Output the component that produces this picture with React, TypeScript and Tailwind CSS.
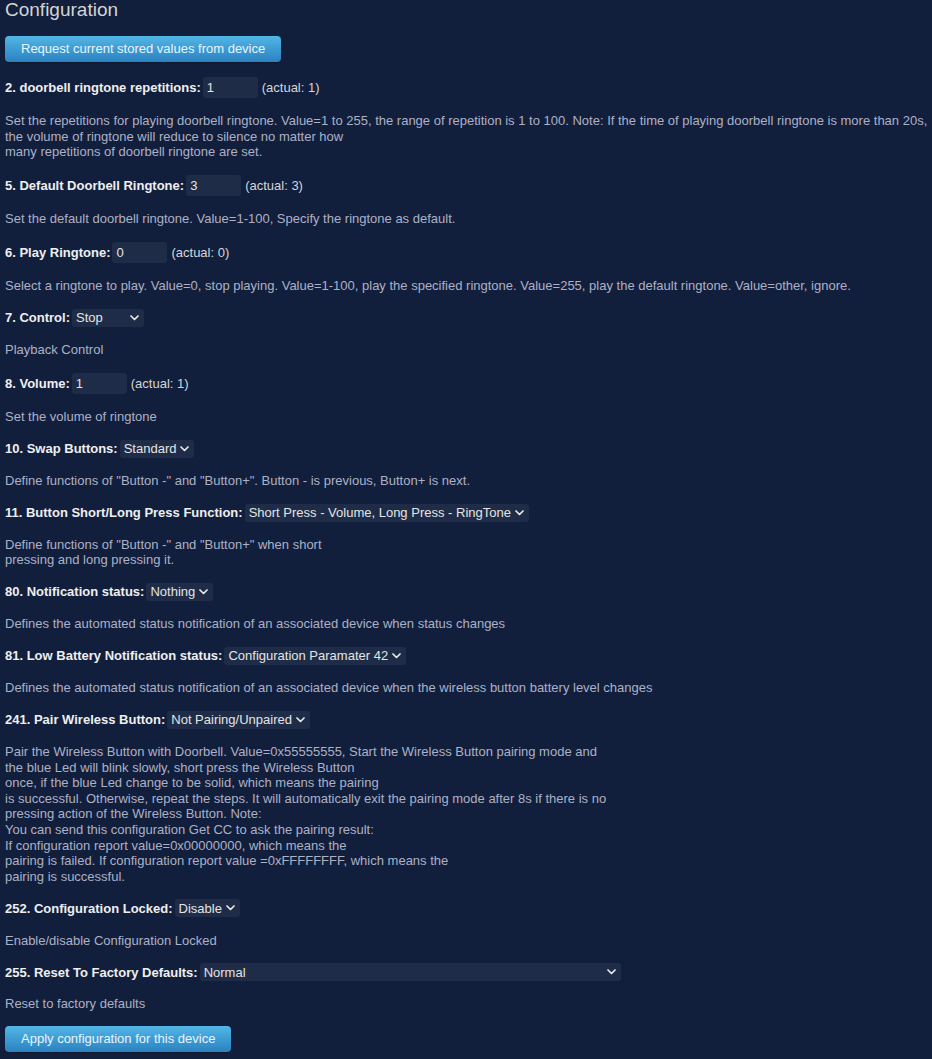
import React from "react";

const Chevron = () => (
  <svg width="9" height="6" viewBox="0 0 9 6" className="shrink-0">
    <path d="M1 1 L4.5 4.5 L8 1" fill="none" stroke="#e8e8e8" strokeWidth="1.7" strokeLinecap="round" strokeLinejoin="round" />
  </svg>
);

const Select = ({ value, w }: { value: string; w?: string }) => (
  <div className={`ml-[2px] h-[18px] ${w ?? ""} flex items-center justify-between gap-[4px] rounded-[3px] bg-[#1f2c47] pl-[4px] pr-[5px] text-[#e4e4e4] font-normal whitespace-nowrap`}>
    <span>{value}</span>
    <Chevron />
  </div>
);

const Input = ({ value, actual }: { value: string; actual: string }) => (
  <>
    <div className="ml-[2px] h-[21px] w-[55px] flex items-center rounded-[3px] bg-[#1f2c47] pl-[4px] text-[#e4e4e4] font-normal">
      {value}
    </div>
    <span className="ml-[4px] font-normal text-[#d6d6d6]">(actual: {actual})</span>
  </>
);

const Row = ({ label, children, tall }: { label: string; children: React.ReactNode; tall?: boolean }) => (
  <div className={`mt-[15.15px] flex items-center ${tall ? "h-[21px]" : "h-[18px]"} font-bold text-[#efefef] whitespace-nowrap`}>
    <span>{label}</span>
    {children}
  </div>
);

const Desc = ({ lines }: { lines: string[] }) => (
  <div className="mt-[15.15px] text-[#adb1c6] leading-[1.2]">
    {lines.map((l, i) => (
      <div key={i} className="whitespace-nowrap">{l}</div>
    ))}
  </div>
);

const Btn = ({ children }: { children: React.ReactNode }) => (
  <div className="inline-flex h-[26px] items-center rounded-[4px] bg-gradient-to-b from-[#52b6e6] to-[#2a82c0] px-[16px] text-[#e9f5fd] shadow-[0_1px_1px_rgba(0,0,0,0.3)]">
    {children}
  </div>
);

export default function App() {
  return (
    <div className="min-h-screen w-full bg-[#121f3c] text-[13px] pl-[5px] overflow-hidden" style={{ fontFamily: "'Liberation Sans', Arial, sans-serif" }}>
      <div className="text-[19px] leading-[19px] text-[#d4d4d4]">Configuration</div>
      <div className="mt-[17px]">
        <Btn>Request current stored values from device</Btn>
      </div>

      <Row label="2. doorbell ringtone repetitions:" tall>
        <Input value="1" actual="1" />
      </Row>
      <Desc
        lines={[
          "Set the repetitions for playing doorbell ringtone. Value=1 to 255, the range of repetition is 1 to 100. Note: If the time of playing doorbell ringtone is more than 20s,",
          "the volume of ringtone will reduce to silence no matter how",
          "many repetitions of doorbell ringtone are set.",
        ]}
      />

      <Row label="5. Default Doorbell Ringtone:" tall>
        <Input value="3" actual="3" />
      </Row>
      <Desc lines={["Set the default doorbell ringtone. Value=1-100, Specify the ringtone as default."]} />

      <Row label="6. Play Ringtone:" tall>
        <Input value="0" actual="0" />
      </Row>
      <Desc
        lines={[
          "Select a ringtone to play. Value=0, stop playing. Value=1-100, play the specified ringtone. Value=255, play the default ringtone. Value=other, ignore.",
        ]}
      />

      <Row label="7. Control:">
        <Select value="Stop" w="w-[72px]" />
      </Row>
      <Desc lines={["Playback Control"]} />

      <Row label="8. Volume:" tall>
        <Input value="1" actual="1" />
      </Row>
      <Desc lines={["Set the volume of ringtone"]} />

      <Row label="10. Swap Buttons:">
        <Select value="Standard" />
      </Row>
      <Desc lines={['Define functions of "Button -" and "Button+". Button - is previous, Button+ is next.']} />

      <Row label="11. Button Short/Long Press Function:">
        <Select value="Short Press - Volume, Long Press - RingTone" />
      </Row>
      <Desc lines={['Define functions of "Button -" and "Button+" when short', "pressing and long pressing it."]} />

      <Row label="80. Notification status:">
        <Select value="Nothing" />
      </Row>
      <Desc lines={["Defines the automated status notification of an associated device when status changes"]} />

      <Row label="81. Low Battery Notification status:">
        <Select value="Configuration Paramater 42" />
      </Row>
      <Desc lines={["Defines the automated status notification of an associated device when the wireless button battery level changes"]} />

      <Row label="241. Pair Wireless Button:">
        <Select value="Not Pairing/Unpaired" />
      </Row>
      <Desc
        lines={[
          "Pair the Wireless Button with Doorbell. Value=0x55555555, Start the Wireless Button pairing mode and",
          "the blue Led will blink slowly, short press the Wireless Button",
          "once, if the blue Led change to be solid, which means the pairing",
          "is successful. Otherwise, repeat the steps. It will automatically exit the pairing mode after 8s if there is no",
          "pressing action of the Wireless Button. Note:",
          "You can send this configuration Get CC to ask the pairing result:",
          "If configuration report value=0x00000000, which means the",
          "pairing is failed. If configuration report value =0xFFFFFFFF, which means the",
          "pairing is successful.",
        ]}
      />

      <Row label="252. Configuration Locked:">
        <Select value="Disable" />
      </Row>
      <Desc lines={["Enable/disable Configuration Locked"]} />

      <Row label="255. Reset To Factory Defaults:">
        <Select value="Normal" w="w-[421px]" />
      </Row>
      <Desc lines={["Reset to factory defaults"]} />

      <div className="mt-[14px]">
        <Btn>Apply configuration for this device</Btn>
      </div>
    </div>
  );
}
